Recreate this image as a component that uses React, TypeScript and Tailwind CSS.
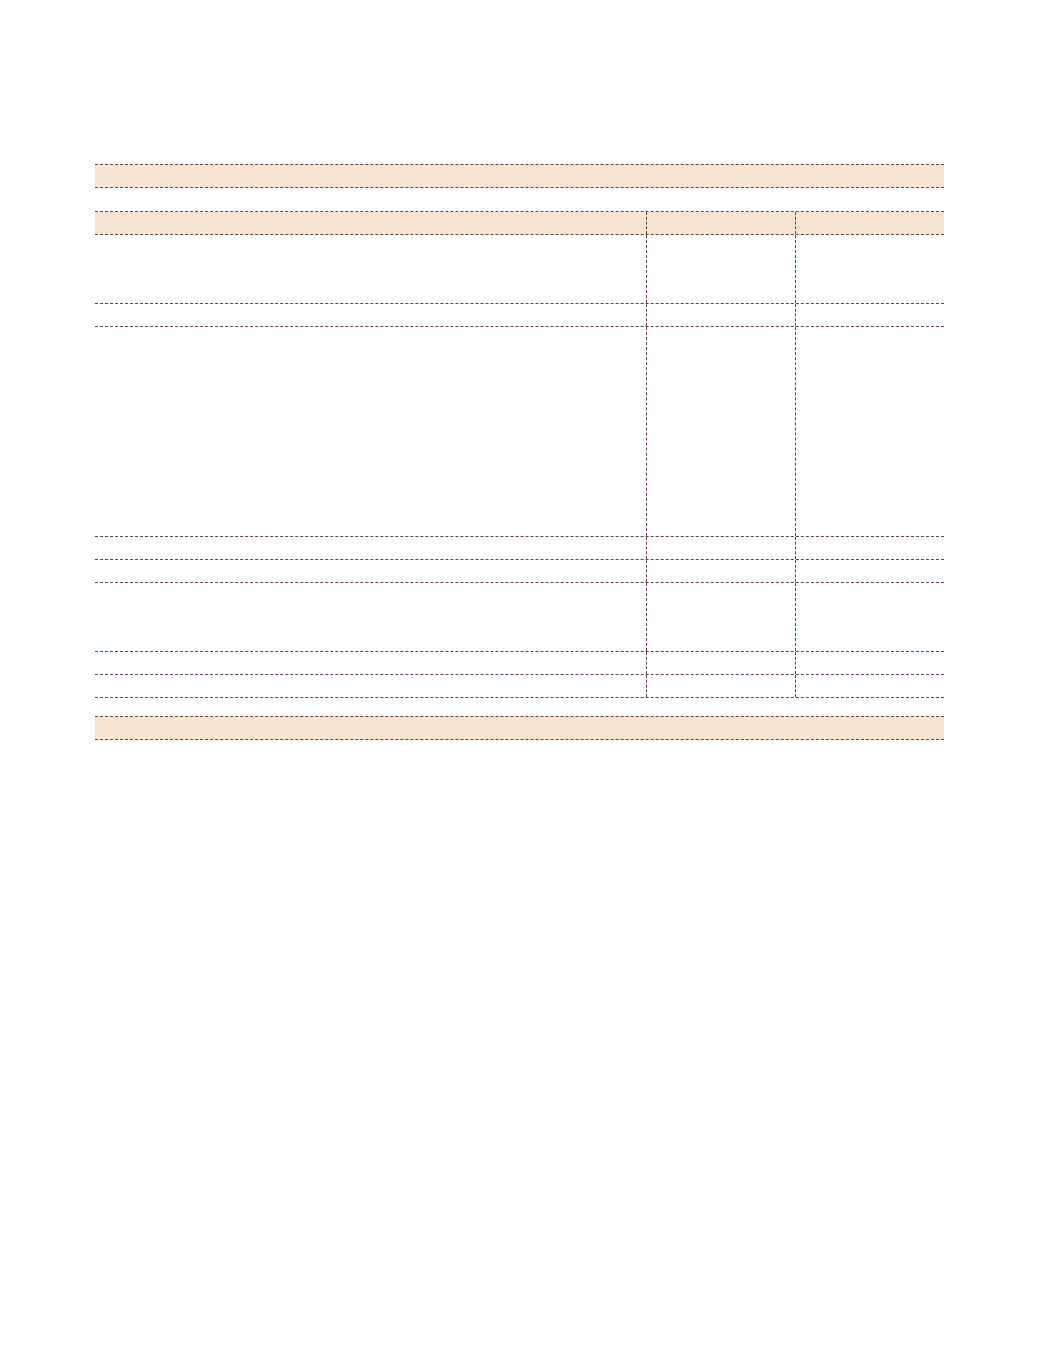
const rows = [69, 23, 210, 23, 23, 69, 23, 23]

function Row({ h, fill }: { h: number; fill?: boolean }) {
  return (
    <div
      className={`flex border-b border-dashed border-[#6a4336] ${fill ? "bg-[#f5e4d2]" : ""}`}
      style={{ height: h }}
    >
      <div className="w-[551px]" />
      <div className="w-[149px] border-l border-dashed border-[#6a4336]" />
      <div className="w-[149px] border-l border-dashed border-[#6a4336]" />
    </div>
  )
}

export default function App() {
  return (
    <div className="min-h-[1353px] w-full bg-white font-['Liberation_Sans',sans-serif]">
      <div className="ml-[95px] w-[849px] pt-[164px]">
        <div className="h-[24px] border-y border-dashed border-[#6a4336] bg-[#f5e4d2]" />

        <div className="mt-[23px] border-t border-dashed border-[#6a4336]">
          <Row h={23} fill />
          {rows.map((h, i) => (
            <Row key={i} h={h} />
          ))}
        </div>

        <div className="mt-[18px] h-[24px] border-y border-dashed border-[#6a4336] bg-[#f5e4d2]" />
      </div>
    </div>
  )
}
